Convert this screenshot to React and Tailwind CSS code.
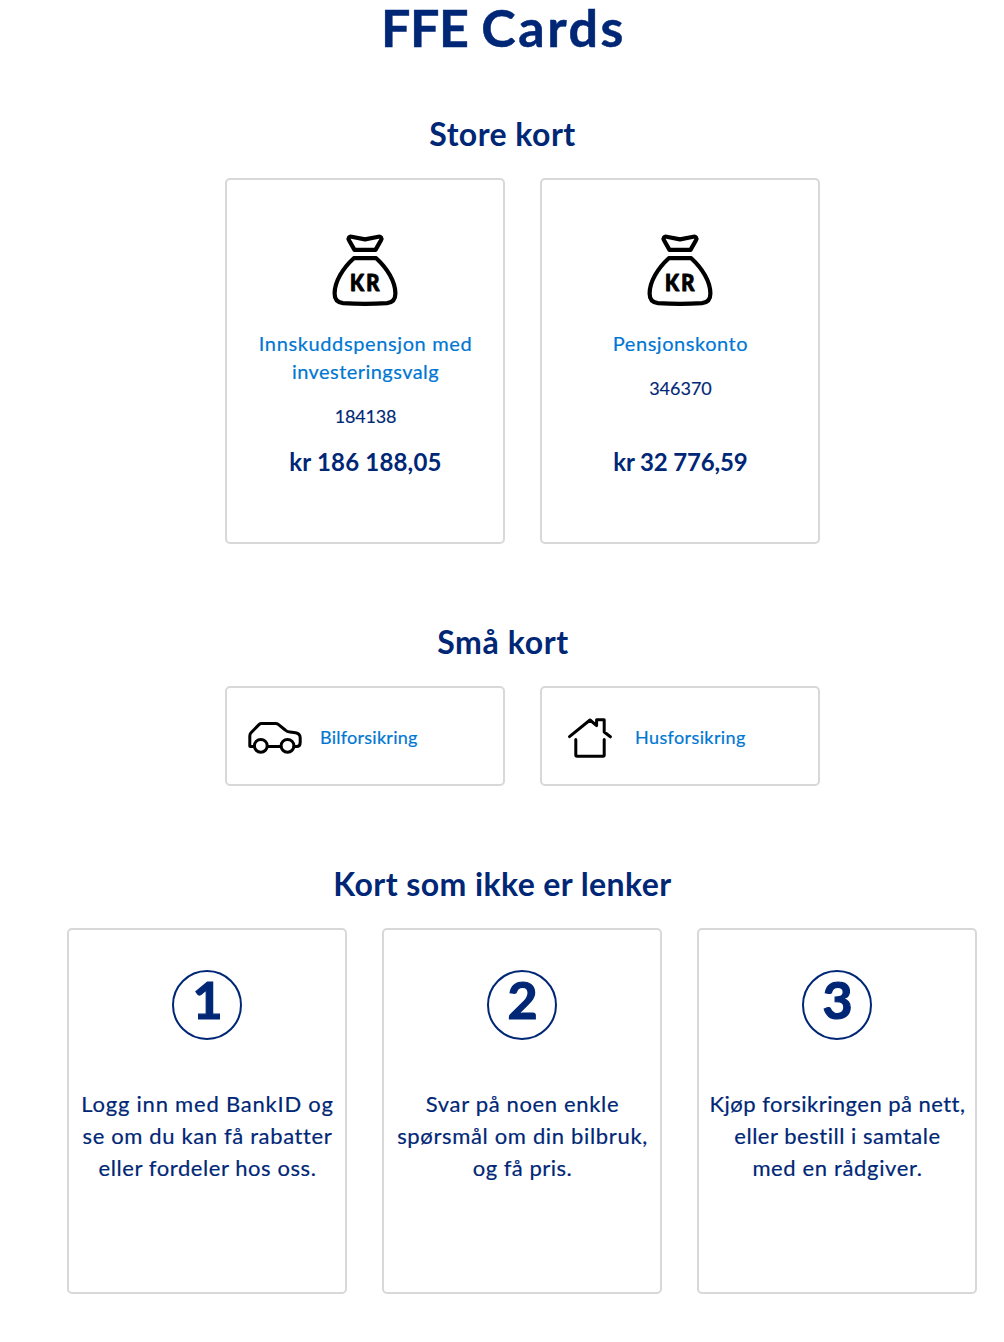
const MoneyBag = () => (
  <svg className="h-[90px] w-[90px]" viewBox="0 0 90 90" fill="none" stroke="#000" strokeWidth="4.2" strokeLinecap="round" strokeLinejoin="round" aria-hidden="true">
    <path d="M34.5 24.9 29 15.2C27.8 13 29.2 11.3 31.6 11.7L45 14.4 58.4 11.7C60.8 11.3 62.2 13 61 15.2L55.5 24.9Z" />
    <path d="M33.8 33.2H56.2C67 43 75.4 56.5 75.4 68.5C75.4 74.5 72.5 77.6 67 78.1Q45 79.6 23 78.1C17.5 77.6 14.6 74.5 14.6 68.5C14.6 56.5 23 43 33.8 33.2Z" />
    <text transform="scale(0.9 1)" x="33.4 51.5" y="65.6" fill="#000" stroke="#000" strokeWidth="1" fontFamily="Lato, sans-serif" fontWeight="900" fontSize="22.5">KR</text>
  </svg>
);

const Car = () => (
  <svg className="mt-0.5 h-[60px] w-[60px] shrink-0" viewBox="0 0 60 60" fill="none" stroke="#000" strokeWidth="3" strokeLinecap="round" strokeLinejoin="round" aria-hidden="true">
    <path d="M9.2 39.5H5.2Q4.8 39.5 4.8 39V29Q4.8 27.2 6 25.8L14.2 17.4Q15.1 16.6 16.4 16.6H30.5Q32.2 16.6 33.6 17.6L40.2 23Q42.2 24.8 45 25.1L50.6 25.8Q55.2 26.6 55.2 31V35.5Q55.2 39.5 51.5 39.5H49M22.4 39.5H35.8" />
    <circle cx="15.8" cy="38.8" r="6.4" />
    <circle cx="42.5" cy="38.8" r="6.4" />
  </svg>
);

const House = () => (
  <svg className="mt-0.5 h-[60px] w-[60px] shrink-0" viewBox="0 0 60 60" fill="none" stroke="#000" strokeWidth="3" strokeLinecap="round" strokeLinejoin="round" aria-hidden="true">
    <path d="M9.5 29.6 30 13 36.6 18.6V12.7H44.2V25L50.4 29.8" />
    <path d="M15.8 32.5V48Q15.8 49.2 17 49.2H43Q44.2 49.2 44.2 48V32.5" />
  </svg>
);

const Card = ({ className, children }) => (
  <div className={`box-border w-[280px] rounded-[5px] border-2 border-[#d8d8d8] bg-white ${className}`}>{children}</div>
);

const Heading = ({ className, children }) => (
  <h2 className={`text-center text-[32px] leading-10 font-bold ${className}`}>{children}</h2>
);

const accounts = [
  {
    lines: [
      { text: 'Innskuddspensjon med', spacing: 'tracking-[0.62px]' },
      { text: 'investeringsvalg', spacing: 'tracking-[0.45px]' },
    ],
    number: '184138',
    numberSpacing: 'tracking-[-0.2px]',
    amount: 'kr 186 188,05',
    amountSpacing: 'tracking-[0.18px]',
  },
  {
    lines: [{ text: 'Pensjonskonto', spacing: 'tracking-[0.55px]' }],
    number: '346370',
    numberSpacing: 'tracking-normal',
    amount: 'kr 32 776,59',
    amountSpacing: 'tracking-[-0.14px]',
  },
];

const steps = [
  [
    { text: 'Logg inn med BankID og', spacing: 'tracking-[0.78px]' },
    { text: 'se om du kan få rabatter', spacing: 'tracking-[0.64px]' },
    { text: 'eller fordeler hos oss.', spacing: 'tracking-[0.57px]' },
  ],
  [
    { text: 'Svar på noen enkle', spacing: 'tracking-[0.65px]' },
    { text: 'spørsmål om din bilbruk,', spacing: 'tracking-[0.66px]' },
    { text: 'og få pris.', spacing: 'tracking-[0.5px]' },
  ],
  [
    { text: 'Kjøp forsikringen på nett,', spacing: 'tracking-[0.46px]' },
    { text: 'eller bestill i samtale', spacing: 'tracking-[0.52px]' },
    { text: 'med en rådgiver.', spacing: 'tracking-[0.64px]' },
  ],
];

export default function App() {
  return (
    <main className="h-[1342px] bg-white font-['Lato',sans-serif] text-[#002776]">
      <h1 className="pl-[3px] text-center text-[52px] leading-[54px] font-bold [-webkit-text-stroke:0.5px]">
        <span className="tracking-[-0.4px]">FFE</span> <span className="tracking-[2.6px]">Cards</span>
      </h1>

      <Heading className="mt-[60px] pl-px tracking-[0.45px]">Store kort</Heading>
      <div className="mt-6 flex justify-center gap-[35px] pl-[41px]">
        {accounts.map((a) => (
          <Card key={a.number} className="flex h-[366px] flex-col items-center pt-[45px] text-center">
            <MoneyBag />
            <div className="mt-[14px] h-[119px] pl-px">
              <a className="block text-[20px] leading-7 text-[#0077d2] [-webkit-text-stroke:0.2px]">
                {a.lines.map((l) => (
                  <span key={l.text} className={`block whitespace-nowrap ${l.spacing}`}>{l.text}</span>
                ))}
              </a>
              <p className={`mt-[19px] text-[18px] leading-6 [-webkit-text-stroke:0.15px] ${a.numberSpacing}`}>{a.number}</p>
            </div>
            <p className={`pl-px text-2xl leading-7 font-bold ${a.amountSpacing}`}>{a.amount}</p>
          </Card>
        ))}
      </div>

      <Heading className="mt-[78px] pl-0.5 tracking-[0.62px]">Små kort</Heading>
      <div className="mt-6 flex justify-center gap-[35px] pl-[41px]">
        <Card className="flex h-[100px] items-center gap-[15px] pl-[18px]">
          <Car />
          <a className="mt-0.5 text-[18px] leading-6 tracking-[0.26px] text-[#0077d2] [-webkit-text-stroke:0.2px]">Bilforsikring</a>
        </Card>
        <Card className="flex h-[100px] items-center gap-[15px] pl-[18px]">
          <House />
          <a className="mt-0.5 text-[18px] leading-6 tracking-[0.39px] text-[#0077d2] [-webkit-text-stroke:0.2px]">Husforsikring</a>
        </Card>
      </div>

      <Heading className="mt-[78px] pl-px tracking-[0.42px]">Kort som ikke er lenker</Heading>
      <div className="mt-6 flex justify-center gap-[35px] pl-10">
        {steps.map((lines, i) => (
          <Card key={i} className="flex h-[366px] flex-col items-center pt-10 text-center">
            <div className="h-[70px] w-[70px] rounded-full border-2 border-[#002776] pl-px text-[52px] leading-[54px] font-bold [-webkit-text-stroke:1.2px]">{i + 1}</div>
            <p className="mt-12 pl-px text-[22px] leading-8 [-webkit-text-stroke:0.2px]">
              {lines.map((l) => (
                <span key={l.text} className={`block whitespace-nowrap ${l.spacing}`}>{l.text}</span>
              ))}
            </p>
          </Card>
        ))}
      </div>
    </main>
  );
}
